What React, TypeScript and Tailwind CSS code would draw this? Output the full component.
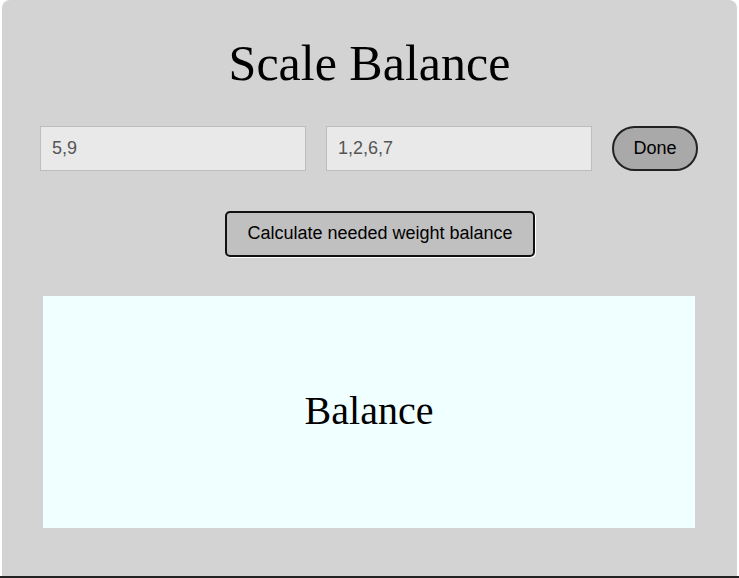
import React from 'react';

const sans = "font-['Liberation_Sans',Arial,sans-serif]";
const serif = "font-['Liberation_Serif','Times_New_Roman',serif]";

export default function App() {
    return (
        <div className="w-[739px] h-[578px] bg-white flex flex-col overflow-hidden">
            <div className="ml-[2px] w-[735px] h-[576px] bg-[#d3d3d3] rounded-t-lg flex flex-col">
                <h1 className={`${serif} text-[50px] leading-[56px] text-black text-center mt-[35px]`}>Scale Balance</h1>
                <div className="flex items-center gap-5 pl-[38px] mt-[35px]">
                    <input
                        defaultValue="5,9"
                        className={`${sans} w-[266px] h-[45px] bg-[#e9e9e9] border border-[#bdbdbd] px-[11px] text-[18px] text-[#555]`}
                    />
                    <input
                        defaultValue="1,2,6,7"
                        className={`${sans} w-[266px] h-[45px] bg-[#e9e9e9] border border-[#bdbdbd] px-[11px] text-[18px] text-[#555]`}
                    />
                    <button className={`${sans} w-[86px] h-[45px] rounded-full bg-[#a9a9a9] border-2 border-[#222] text-[18px] text-black`}>
                        Done
                    </button>
                </div>
                <div className="flex mt-[40px] pl-[223px]">
                    <button className={`${sans} w-[310px] h-[46px] pb-[2px] rounded-[5px] bg-[#c0c0c0] border-2 border-[#111] shadow-[1px_1px_0_#fff] text-[18px] text-black`}>
                        Calculate needed weight balance
                    </button>
                </div>
                <div className="ml-[41px] mt-[39px] w-[652px] h-[232px] pb-[3px] bg-[#f0ffff] flex items-center justify-center">
                    <span className={`${serif} text-[40px] text-black`}>Balance</span>
                </div>
            </div>
            <div className="h-[2px] bg-[#222]" />
        </div>
    );
}
